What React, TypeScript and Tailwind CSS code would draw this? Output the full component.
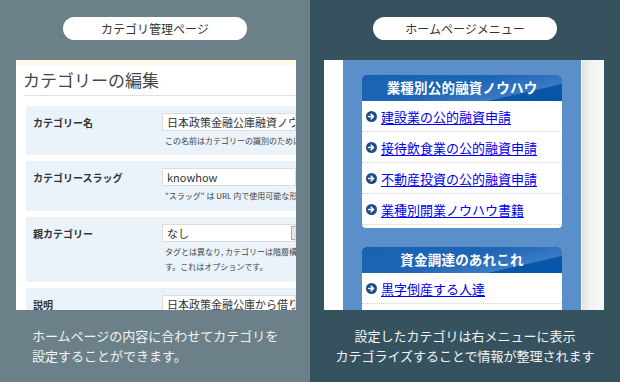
import React from "react";

const JP = { fontFamily: '"Noto Sans CJK JP", "Noto Sans", sans-serif' };

function Arrow() {
  return (
    <svg width="11" height="11" viewBox="0 0 11 11" className="shrink-0">
      <circle cx="5.5" cy="5.5" r="5.5" fill="#1d4d88" />
      <path d="M2.6 5.5h4.6M5.2 3.2l2.3 2.3-2.3 2.3" stroke="#fff" strokeWidth="1.6" fill="none" strokeLinecap="round" strokeLinejoin="round" />
    </svg>
  );
}

function MenuBox({ title, items, tail }: { title: string; items: string[]; tail?: boolean }) {
  return (
    <div className="w-[200px] shrink-0 bg-white rounded-[4px] overflow-hidden pb-[3px]">
      <div className="h-[26px] flex items-center justify-center bg-[linear-gradient(167deg,#1b61b1_0%,#1f65b5_45%,#3a7cc4_76%,#0a58aa_76.5%,#0055a8_100%)]">
        <span className="text-white font-bold text-[13.5px] leading-none tracking-[0.2px]">{title}</span>
      </div>
      {items.map((t) => (
        <div key={t} className="h-[31px] flex items-center gap-[4px] pl-[4px] border-b border-dotted border-[#cfcfcf]">
          <Arrow />
          <span className="text-[13px] text-[#0000ee] underline underline-offset-[2px] leading-none">{t}</span>
        </div>
      ))}
      {tail && <div className="h-[30px]" />}
    </div>
  );
}

function FormRow({
  label,
  value,
  helper,
  h,
  select,
}: {
  label: string;
  value: string;
  helper: string[];
  h: string;
  select?: boolean;
}) {
  return (
    <div className={`flex shrink-0 bg-[#eaf2fa] ${h}`}>
      <div className="w-[136px] pl-[7px] pt-[10px] text-[10px] font-bold text-[#333] leading-[14px]">{label}</div>
      <div className="flex-1 pt-[7px] min-w-0">
        <div className="h-[18px] bg-white border border-[#dcdcdc] flex items-center pl-[4px] text-[11px] text-[#333] whitespace-nowrap overflow-hidden relative">
          {value}
          {select && <div className="absolute right-[-6px] top-[1px] w-[10px] h-[14px] bg-[#e6e6e6] border border-[#aaa]" />}
        </div>
        <div className="pl-[3px] pt-[2px] text-[8px] text-[#444] leading-[15px] whitespace-nowrap">
          {helper.map((x) => (
            <div key={x}>{x}</div>
          ))}
        </div>
      </div>
    </div>
  );
}

export default function App() {
  return (
    <div className="w-[620px] h-[382px] flex overflow-hidden" style={JP}>
      {/* Left */}
      <div className="w-[310px] h-full bg-[#6b8089] flex flex-col">
        <div className="pt-[17px] flex justify-center">
          <div className="w-[184px] h-[23px] rounded-full bg-white flex items-center justify-center text-[12px] text-[#333]">
            カテゴリ管理ページ
          </div>
        </div>
        <div className="mt-[20px] ml-[16px] w-[280px] h-[250px] shrink-0 bg-white overflow-hidden flex flex-col">
          <div className="h-[5px] bg-[#fcf9e6] shrink-0" />
          <div className="h-[30px] pl-[7px] flex items-center text-[17px] text-[#464646] shrink-0">カテゴリーの編集</div>
          <div className="ml-[8px] h-[1px] bg-[#e0e0e0] shrink-0" />
          <div className="ml-[10px] mt-[10px] flex flex-col gap-[6px]">
            <FormRow h="h-[49px]" label="カテゴリー名" value="日本政策金融公庫融資ノウハウ" helper={["この名前はカテゴリーの識別のために。"]} />
            <FormRow h="h-[50px]" label="カテゴリースラッグ" value="knowhow" helper={["\"スラッグ\" は URL 内で使用可能な形式"]} />
            <FormRow
              h="h-[65px]"
              label="親カテゴリー"
              value="なし"
              select
              helper={["タグとは異なり, カテゴリーは階層構造を", "す。これはオプションです。"]}
            />
            <FormRow h="h-[40px]" label="説明" value="日本政策金融公庫から借りる為" helper={[]} />
          </div>
        </div>
        <div className="pt-[16px] pl-[32px] text-[13px] leading-[20px] text-[#f2f5f6]">
          <div>ホームページの内容に合わせてカテゴリを</div>
          <div>設定することができます。</div>
        </div>
      </div>

      {/* Right */}
      <div className="w-[310px] h-full bg-[#37525f] flex flex-col">
        <div className="pt-[17px] flex justify-center">
          <div className="w-[184px] h-[23px] rounded-full bg-white flex items-center justify-center text-[12px] text-[#333]">
            ホームページメニュー
          </div>
        </div>
        <div className="mt-[20px] ml-[14px] w-[280px] h-[250px] shrink-0 bg-white overflow-hidden flex">
          <div className="w-[19px] bg-white shrink-0" />
          <div className="w-[238px] bg-[#5b8fc9] shrink-0 pt-[15px] pl-[19px] flex flex-col gap-[19px] overflow-hidden">
            <MenuBox
              title="業種別公的融資ノウハウ"
              items={["建設業の公的融資申請", "接待飲食業の公的融資申請", "不動産投資の公的融資申請", "業種別開業ノウハウ書籍"]}
            />
            <MenuBox title="資金調達のあれこれ" items={["黒字倒産する人達"]} tail />
          </div>
          <div className="w-[1px] bg-white shrink-0" />
          <div className="flex-1 bg-[linear-gradient(90deg,#e2e2e2_0%,#f3f3f3_40%,#f8f8f8_100%)]" />
        </div>
        <div className="pt-[16px] text-center text-[13px] leading-[20px] text-[#f2f5f6]">
          <div>設定したカテゴリは右メニューに表示</div>
          <div>カテゴライズすることで情報が整理されます</div>
        </div>
      </div>
    </div>
  );
}
